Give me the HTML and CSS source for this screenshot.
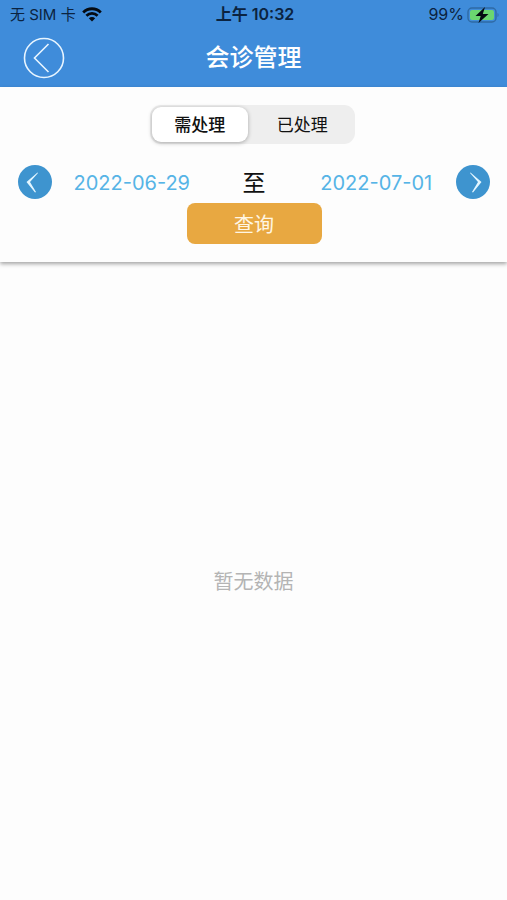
FILE: index.html
```html
<!DOCTYPE html>
<html lang="zh-CN">
<head>
<meta charset="utf-8">
<meta name="viewport" content="width=device-width, initial-scale=1">
<title>会诊管理</title>
<link rel="stylesheet" href="styles.css">
</head>
<body>
<header class="header">
  <div class="status">
    <div class="status-left">
      <span class="carrier">无 SIM 卡</span>
      <svg class="wifi" viewBox="0 0 20 15" aria-hidden="true">
        <path d="M1.200 5.400C6.200.5 13.800.5 18.800 5.400M4.400 8.700c3.200-3.100 8-3.100 11.200 0" fill="none" stroke="currentColor" stroke-width="2.800"/>
        <path d="M6.800 11.300c1.900-1.700 4.500-1.700 6.400 0L10 14.600z" fill="currentColor"/>
      </svg>
    </div>
    <div class="status-time">上午 10:32</div>
    <div class="status-right">
      <span>99%</span>
      <svg class="battery" viewBox="0 0 33 18" aria-hidden="true">
        <rect x="1" y="2" width="28" height="14" rx="4" fill="none" stroke="#2f6aa5" stroke-width="1.400"/>
        <rect x="3" y="4" width="24" height="10" rx="2" fill="#6bd670"/>
        <path d="M30.500 7c1.500.6 1.500 3.400 0 4z" fill="#2f6aa5"/>
        <path d="M18 1 8.500 10h5.200l-2.200 7L21.500 8h-5.700z" fill="#050b12"/>
      </svg>
    </div>
  </div>
  <div class="nav">
    <button class="back" type="button" aria-label="返回">
      <svg viewBox="0 0 42 42" aria-hidden="true">
        <circle cx="21" cy="21" r="19.500"/>
        <path d="M25.500 7 11.500 21l14 14"/>
      </svg>
    </button>
    <h1 class="title">会诊管理</h1>
  </div>
</header>
<section class="filters">
  <div class="segments">
    <button class="segment segment-active" type="button" aria-pressed="true">需处理</button>
    <button class="segment" type="button" aria-pressed="false">已处理</button>
  </div>
  <div class="range">
    <button class="arrow" type="button" aria-label="前一天">
      <svg viewBox="0 0 34 34" aria-hidden="true"><path d="M19.500 7.500 8.500 17l8.500 10.500 1-.6L12 17l8-9z"/></svg>
    </button>
    <button class="date" type="button">2022-06-29</button>
    <span class="to">至</span>
    <button class="date" type="button">2022-07-01</button>
    <button class="arrow" type="button" aria-label="后一天">
      <svg viewBox="0 0 34 34" aria-hidden="true"><path d="M14.500 7.500 25.500 17 17 27.500l-1-.6L22 17l-8-9z"/></svg>
    </button>
  </div>
  <button class="query" type="button">查询</button>
</section>
<main class="content">
  <p class="empty">暂无数据</p>
</main>
</body>
</html>
```
FILE: styles.css
```css
* {
  box-sizing: border-box;
}

body {
  margin: 0;
  min-height: 100vh;
  display: flex;
  flex-direction: column;
  background: #fdfdfd;
  color: #111;
  font-family: Inter, "Noto Sans CJK SC", sans-serif;
}

button {
  margin: 0;
  padding: 0;
  border: 0;
  background: none;
  color: inherit;
  font: inherit;
  cursor: pointer;
}

svg {
  display: block;
}

.header {
  background: #3f8cda;
}

.status {
  display: grid;
  grid-template-columns: 1fr auto 1fr;
  align-items: center;
  height: 29px;
  padding: 0 7px 0 10px;
  color: #0b2340;
  font-size: 16px;
  line-height: 29px;
}

.status-left,
.status-right {
  display: flex;
  align-items: center;
  gap: 6px;
}

.status-right {
  justify-content: flex-end;
  gap: 3px;
}

.carrier {
  font-size: 15px;
}

.status-time {
  font-weight: 600;
}

.wifi {
  width: 20px;
  height: 15px;
  color: #050b12;
}

.battery {
  width: 33px;
  height: 18px;
}

.nav {
  display: grid;
  grid-template-columns: 42px 1fr 42px;
  align-items: center;
  height: 58px;
  padding: 0 23px;
}

.back {
  width: 42px;
  height: 42px;
}

.back svg {
  fill: none;
  stroke: #e8f5ff;
  stroke-width: 1.6;
}

.title {
  margin: 0;
  color: #fff;
  font-size: 24px;
  font-weight: 500;
  line-height: 36px;
  text-align: center;
}

.filters {
  display: flex;
  flex-direction: column;
  align-items: center;
  padding: 18px 17px 18px 18px;
  box-shadow: 0 2px 4px rgba(0, 0, 0, 0.35);
}

.segments {
  display: grid;
  grid-template-columns: 1fr 1fr;
  width: 205px;
  height: 39px;
  margin-right: 4px;
  padding: 2px;
  border-radius: 11px;
  background: #eee;
}

.segment {
  border-radius: 9px;
  font-size: 17px;
  line-height: 24px;
}

.segment-active {
  margin-right: 4px;
  background: #fff;
  box-shadow: 0 1px 4px rgba(0, 0, 0, 0.3);
  font-weight: 500;
}

.range {
  display: grid;
  grid-template-columns: 34px 1fr 85px 1fr 34px;
  align-items: center;
  width: 100%;
  height: 34px;
  margin: 21px 0 4px;
}

.arrow {
  width: 34px;
  height: 34px;
  border-radius: 50%;
  background: #3e94cf;
}

.arrow svg {
  fill: #e3f6ff;
}

.date {
  padding-top: 2px;
  color: #56b4e6;
  font-size: 20px;
  line-height: 30px;
}

.to {
  padding-top: 2px;
  font-size: 23px;
  line-height: 32px;
  text-align: center;
}

.query {
  height: 41px;
  width: 135px;
  padding-top: 2px;
  border-radius: 8px;
  background: #e8a841;
  color: #fff6e3;
  font-size: 20px;
  line-height: 30px;
}

.content {
  flex: 1;
  display: flex;
  align-items: center;
  justify-content: center;
  padding-top: 2px;
}

.empty {
  margin: 0;
  color: #b4b4b4;
  font-size: 20px;
  line-height: 30px;
}
```
